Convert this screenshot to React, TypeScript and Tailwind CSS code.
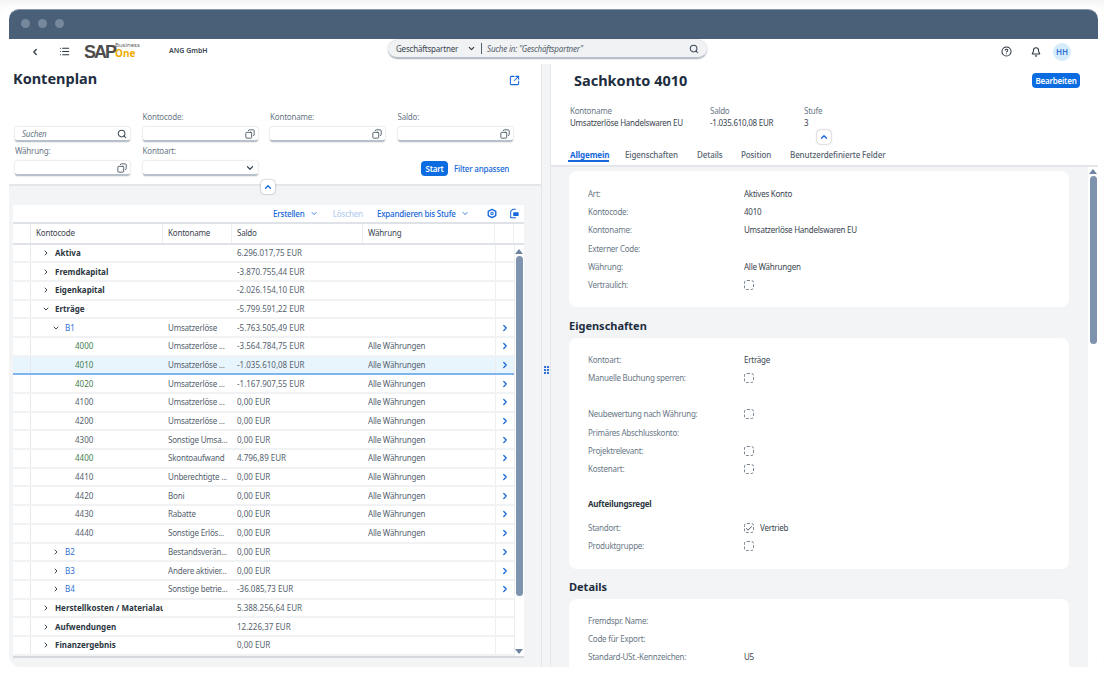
import { Bell, Check, ChevronDown, ChevronLeft, ChevronRight, ChevronUp, CircleHelp, Copy, List, Search, SquareArrowOutUpRight } from "lucide-react";

type Row = {
  level: 0 | 1 | 2;
  code: string;
  name?: string;
  saldo: string;
  cur?: boolean;
  exp?: "open" | "closed";
  tone: "bold" | "blue" | "green" | "gray";
  nav?: boolean;
  sel?: boolean;
};

const rows: Row[] = [
  { level: 0, code: "Aktiva", saldo: "6.296.017,75 EUR", exp: "closed", tone: "bold" },
  { level: 0, code: "Fremdkapital", saldo: "-3.870.755,44 EUR", exp: "closed", tone: "bold" },
  { level: 0, code: "Eigenkapital", saldo: "-2.026.154,10 EUR", exp: "closed", tone: "bold" },
  { level: 0, code: "Erträge", saldo: "-5.799.591,22 EUR", exp: "open", tone: "bold" },
  { level: 1, code: "B1", name: "Umsatzerlöse", saldo: "-5.763.505,49 EUR", exp: "open", tone: "blue", nav: true },
  { level: 2, code: "4000", name: "Umsatzerlöse ...", saldo: "-3.564.784,75 EUR", cur: true, tone: "green", nav: true },
  { level: 2, code: "4010", name: "Umsatzerlöse ...", saldo: "-1.035.610,08 EUR", cur: true, tone: "green", nav: true, sel: true },
  { level: 2, code: "4020", name: "Umsatzerlöse ...", saldo: "-1.167.907,55 EUR", cur: true, tone: "green", nav: true },
  { level: 2, code: "4100", name: "Umsatzerlöse ...", saldo: "0,00 EUR", cur: true, tone: "gray", nav: true },
  { level: 2, code: "4200", name: "Umsatzerlöse ...", saldo: "0,00 EUR", cur: true, tone: "gray", nav: true },
  { level: 2, code: "4300", name: "Sonstige Umsa...", saldo: "0,00 EUR", cur: true, tone: "gray", nav: true },
  { level: 2, code: "4400", name: "Skontoaufwand", saldo: "4.796,89 EUR", cur: true, tone: "green", nav: true },
  { level: 2, code: "4410", name: "Unberechtigte ...", saldo: "0,00 EUR", cur: true, tone: "gray", nav: true },
  { level: 2, code: "4420", name: "Boni", saldo: "0,00 EUR", cur: true, tone: "gray", nav: true },
  { level: 2, code: "4430", name: "Rabatte", saldo: "0,00 EUR", cur: true, tone: "gray", nav: true },
  { level: 2, code: "4440", name: "Sonstige Erlös...", saldo: "0,00 EUR", cur: true, tone: "gray", nav: true },
  { level: 1, code: "B2", name: "Bestandsverän...", saldo: "0,00 EUR", exp: "closed", tone: "blue", nav: true },
  { level: 1, code: "B3", name: "Andere aktivier...", saldo: "0,00 EUR", exp: "closed", tone: "blue", nav: true },
  { level: 1, code: "B4", name: "Sonstige betrie...", saldo: "-36.085,73 EUR", exp: "closed", tone: "blue", nav: true },
  { level: 0, code: "Herstellkosten / Materialaufwand", saldo: "5.388.256,64 EUR", exp: "closed", tone: "bold" },
  { level: 0, code: "Aufwendungen", saldo: "12.226,37 EUR", exp: "closed", tone: "bold" },
  { level: 0, code: "Finanzergebnis", saldo: "0,00 EUR", exp: "closed", tone: "bold" },
];

const toneClass = {
  bold: "font-bold text-[#2b3640]",
  blue: "text-[#2f6fd6]",
  green: "text-[#3f7d4e]",
  gray: "text-[#55626e]",
};

const levelClass = { 0: "pl-[11px]", 1: "pl-[21px]", 2: "pl-[44px]" };

function HexGear() {
  return (
    <svg viewBox="0 0 12 12" className="ml-[18px] h-[11px] w-[11px]" fill="none" stroke="currentColor">
      <path d="M6 1l4.5 2.5v5L6 11 1.500 8.500v-5z" strokeWidth="1.6" strokeLinejoin="round" />
      <circle cx="6" cy="6" r="1.500" strokeWidth="1.2" />
    </svg>
  );
}

function ExportIcon() {
  return (
    <svg viewBox="0 0 12 12" className="ml-[12px] h-[11px] w-[11px]" fill="none" stroke="currentColor">
      <path d="M8 1H4.500L2 3.500V11h6.500" strokeWidth="1.200" strokeLinejoin="round" />
      <rect x="5" y="4.500" width="6.500" height="4.500" fill="currentColor" stroke="none" rx="0.500" />
    </svg>
  );
}

function FilterField({ label, kind }: { label?: string; kind: "copy" | "search" | "select" }) {
  return (
    <div className="flex w-[115px] flex-col">
      <div className="h-[15px] text-[8px] leading-[10px] tracking-[-0.2px] text-[#6a7886]">{label}</div>
      <div className="flex h-[15px] items-center justify-between rounded-[3px] border-b-2 border-b-[#b8c1cb] bg-white px-[2px] pr-[3px] shadow-[0_0_2px_rgba(0,0,0,0.25)]">
        <span className="pl-[5px] text-[8px] tracking-[-0.2px] text-[#6a7886] italic">{kind === "search" ? "Suchen" : ""}</span>
        {kind === "copy" && <Copy className="h-[10px] w-[10px] -scale-x-100 text-[#3c4a58]" strokeWidth={2} />}
        {kind === "search" && <Search className="h-[10px] w-[10px] text-[#3c4a58]" strokeWidth={2.5} />}
        {kind === "select" && <ChevronDown className="h-[10px] w-[10px] text-[#3c4a58]" strokeWidth={3} />}
      </div>
    </div>
  );
}

function CollapseBtn() {
  return (
    <div className="flex h-[14px] w-[14px] items-center justify-center rounded-[4px] bg-white shadow-[0_0_2px_rgba(0,0,0,0.45)]">
      <ChevronUp className="h-[10px] w-[10px] text-[#1667d9]" strokeWidth={3} />
    </div>
  );
}

function TreeRow({ row }: { row: Row }) {
  return (
    <div
      className={`grid h-[18.7px] grid-cols-[18px_132px_69px_131px_132px_19px] items-center border-b-2 text-[8px] ${
        row.sel ? "border-b-[#7fb4ee] bg-[#e9f5fd]" : "border-b-[#f1f2f4] bg-white"
      }`}
    >
      <div className="h-full border-r border-r-[#e6e8eb]" />
      <div className={`flex h-full items-center overflow-hidden whitespace-nowrap ${levelClass[row.level]}`}>
        {row.exp === "closed" && <ChevronRight className="mr-[5px] h-[8px] w-[8px] shrink-0 text-[#3c4a58]" strokeWidth={3} />}
        {row.exp === "open" && <ChevronDown className="mr-[5px] h-[8px] w-[8px] shrink-0 text-[#3c4a58]" strokeWidth={3} />}
        <span className={toneClass[row.tone]}>{row.code}</span>
      </div>
      <div className="pl-[5px] tracking-[-0.2px] whitespace-nowrap text-[#55626e]">{row.name}</div>
      <div className="pl-[5px] whitespace-nowrap text-[#55626e]">{row.saldo}</div>
      <div className="pl-[5px] tracking-[-0.2px] text-[#55626e]">{row.cur ? "Alle Währungen" : ""}</div>
      <div className="flex h-full items-center justify-center border-l border-l-[#eceef0] pr-[1px]">
        {row.nav && <ChevronRight className="h-[10px] w-[10px] text-[#1667d9]" strokeWidth={3} />}
      </div>
    </div>
  );
}

function Field({ label, value, box, checked }: { label: string; value?: string; box?: boolean; checked?: boolean }) {
  return (
    <div className="flex h-[18.2px] items-center text-[8px] tracking-[-0.25px]">
      <div className="w-[156px] shrink-0 text-[#6a7886]">{label}</div>
      {box && (
        <div className="mr-[6px] flex h-[10px] w-[10px] items-center justify-center rounded-[3px] border border-dashed border-[#7d8791]">
          {checked && <Check className="h-[9px] w-[9px] text-[#2b3640]" strokeWidth={2.5} />}
        </div>
      )}
      {value && <div className="whitespace-nowrap text-[#3a4550]">{value}</div>}
    </div>
  );
}

function Card({ children, className }: { children: React.ReactNode; className: string }) {
  return <div className={`flex flex-col rounded-[8px] bg-white pl-[19px] ${className}`}>{children}</div>;
}

export default function App() {
  return (
    <div className="h-[683px] w-[1104px] overflow-hidden bg-white [font-family:'Noto_Sans','Open_Sans',sans-serif]">
      <div className="flex h-[667px] flex-col pt-[9px] pr-[6px] pl-[9px] shadow-[inset_0_8px_8px_-4px_rgba(0,0,0,0.05)]">
        <div className="flex h-[30px] shrink-0 items-center gap-[8px] rounded-t-[10px] border-t border-t-[#8a98a8] bg-[#4a5f78] pb-[2px] pl-[12px]">
          <span className="h-[9px] w-[9px] rounded-full bg-[#76889c]" />
          <span className="h-[9px] w-[9px] rounded-full bg-[#76889c]" />
          <span className="h-[9px] w-[9px] rounded-full bg-[#76889c]" />
        </div>

        <div className="relative flex h-[25px] shrink-0 items-center bg-white">
          <ChevronLeft className="ml-[21px] h-[10px] w-[10px] text-[#2b3640]" strokeWidth={3} />
          <List className="ml-[19px] h-[11px] w-[11px] text-[#2b3640]" strokeWidth={2.5} />
          <div className="relative ml-[14px] h-[18px] w-[58px]">
            <span className="absolute top-[-3px] left-0 text-[18px] leading-[24px] font-bold tracking-[-2px] text-[#4d4d4d] [font-family:'Liberation_Sans',sans-serif]">SAP</span>
            <span className="absolute top-[0px] left-[31px] text-[6px] leading-[5px] text-[#5c5c5c]">Business</span>
            <span className="absolute top-[6px] left-[31px] text-[10px] leading-[8px] font-bold text-[#f0ab00]">One</span>
          </div>
          <span className="ml-[27px] text-[7px] font-semibold text-[#3a4550]">ANG GmbH</span>
          <div className="absolute top-[1px] left-[379px] flex h-[19px] w-[319px] items-center rounded-[10px] border-b-2 border-b-[#b8c1cb] bg-[#f1f2f3] pr-[8px] pl-[8px] shadow-[0_0_2px_rgba(0,0,0,0.25)]">
            <span className="text-[8px] tracking-[-0.2px] text-[#3a4550]">Geschäftspartner</span>
            <ChevronDown className="ml-[9px] h-[9px] w-[9px] text-[#2b3640]" strokeWidth={3} />
            <span className="mx-[5px] h-[11px] w-px bg-[#55626e]" />
            <span className="text-[8px] tracking-[-0.2px] text-[#55626e] italic">Suche in: "Geschäftspartner"</span>
            <Search className="ml-auto h-[10px] w-[10px] text-[#3c4a58]" strokeWidth={2.5} />
          </div>
          <div className="ml-auto flex items-center pr-[27px]">
            <CircleHelp className="h-[11px] w-[11px] text-[#2b3640]" strokeWidth={2.2} />
            <Bell className="ml-[19px] h-[10px] w-[10px] text-[#2b3640]" strokeWidth={2.5} />
            <div className="ml-[12px] flex h-[18px] w-[18px] items-center justify-center rounded-full bg-[#d5ecfb] text-[8px] font-semibold text-[#2f6fd6]">HH</div>
          </div>
        </div>

        <div className="flex min-h-0 flex-1 overflow-hidden rounded-b-[12px] bg-[#f3f4f6]">
          <div className="flex w-[532px] shrink-0 flex-col">
            <div className="relative h-[122px] shrink-0 border-b-2 border-b-[#e4e6e9] bg-white pl-[5px]">
              <div className="flex h-[29px] items-center justify-between pr-[21px]">
                <h1 className="-ml-px text-[14.5px] font-bold text-[#1d2d3e]">Kontenplan</h1>
                <SquareArrowOutUpRight className="mt-[4px] h-[11px] w-[11px] text-[#1667d9]" strokeWidth={2.3} />
              </div>
              <div className="mt-[19px] flex gap-[12.5px] pl-px">
                <FilterField kind="search" />
                <FilterField label="Kontocode:" kind="copy" />
                <FilterField label="Kontoname:" kind="copy" />
                <FilterField label="Saldo:" kind="copy" />
              </div>
              <div className="mt-[4px] flex items-end gap-[12.5px] pl-px">
                <FilterField label="Währung:" kind="copy" />
                <FilterField label="Kontoart:" kind="select" />
                <div className="ml-[151px] flex items-center gap-[6px]">
                  <button type="button" className="h-[15px] w-[27px] rounded-[4px] bg-[#0a6ce0] text-[8px] tracking-[-0.2px] font-semibold text-white">Start</button>
                  <span className="text-[8px] tracking-[-0.2px] font-medium text-[#1667d9]">Filter anpassen</span>
                </div>
              </div>
              <div className="absolute top-[116px] left-[252px]"><CollapseBtn /></div>
            </div>

            <div className="mt-[19px] ml-[4px] w-[511px]">
              <div className="flex h-[17px] items-center whitespace-nowrap bg-white pr-[5px] text-[8px] tracking-[-0.2px] font-medium text-[#1667d9]">
                <span className="ml-[260px]">Erstellen</span>
                <ChevronDown className="ml-[5px] h-[9px] w-[9px]" strokeWidth={2.5} />
                <span className="ml-[15px] text-[#b4cdef]">Löschen</span>
                <span className="ml-[14px]">Expandieren bis Stufe</span>
                <ChevronDown className="ml-[5px] h-[9px] w-[9px]" strokeWidth={2.5} />
                <HexGear />
                <ExportIcon />
              </div>
              <div className="grid h-[22.5px] grid-cols-[18px_132px_69px_131px_132px_19px_10px] items-center border-y-2 border-y-[#dfe2e6] bg-white text-[8px] tracking-[-0.2px] text-[#3a4550]">
                <div className="h-full border-r border-r-[#e6e8eb]" />
                <div className="flex h-full items-center border-r border-r-[#eceef0] pb-px pl-[5px]">Kontocode</div>
                <div className="flex h-full items-center border-r border-r-[#eceef0] pb-px pl-[5px]">Kontoname</div>
                <div className="flex h-full items-center border-r border-r-[#eceef0] pb-px pl-[5px]">Saldo</div>
                <div className="flex h-full items-center border-r border-r-[#eceef0] pb-px pl-[5px]">Währung</div>
                <div className="h-full border-r border-r-[#eceef0]" />
                <div />
              </div>
              <div className="flex border-b-2 border-b-[#d4d7db] bg-white">
                <div className="w-[501px]">
                  {rows.map((row) => (
                    <TreeRow key={row.code} row={row} />
                  ))}
                </div>
                <div className="flex w-[10px] flex-col items-center border-l border-l-[#eceef0] pt-[4px] pr-[1px] pb-[2px]">
                  <span className="h-0 w-0 border-x-[4px] border-b-[5px] border-x-transparent border-b-[#6f84a0]" />
                  <span className="mt-[2px] h-[340px] w-[7px] rounded-[4px] bg-[#7e93ae]" />
                  <span className="mt-auto h-0 w-0 border-x-[4px] border-t-[5px] border-x-transparent border-t-[#6f84a0]" />
                </div>
              </div>
            </div>
          </div>

          <div className="relative flex w-[10px] shrink-0 items-center justify-center border-x border-x-[#e4e6e9] bg-[#f3f4f6] pt-[9px]">
            <div className="grid grid-cols-2 gap-[1px]">
              {[1, 2, 3, 4, 5, 6].map((i) => (
                <span key={i} className="h-[2px] w-[2px] bg-[#2f6fd6]" />
              ))}
            </div>
          </div>

          <div className="flex min-w-0 flex-1 flex-col">
            <div className="relative h-[103px] shrink-0 border-b-2 border-b-[#e4e6e9] bg-white pl-[19px]">
              <div className="flex h-[33px] items-center justify-between pr-[18px] pl-[4px]">
                <h2 className="text-[14.5px] font-bold text-[#1d2d3e]">Sachkonto 4010</h2>
                <button type="button" className="h-[15px] w-[48px] rounded-[4px] bg-[#0a6ce0] text-[8px] tracking-[-0.2px] font-semibold text-white">Bearbeiten</button>
              </div>
              <div className="mt-[8px] flex text-[8px] tracking-[-0.25px]">
                <div className="w-[140px]">
                  <div className="leading-[12px] text-[#6a7886]">Kontoname</div>
                  <div className="leading-[12px] text-[#3a4550]">Umsatzerlöse Handelswaren EU</div>
                </div>
                <div className="w-[94px]">
                  <div className="leading-[12px] text-[#6a7886]">Saldo</div>
                  <div className="leading-[12px] text-[#3a4550]">-1.035.610,08 EUR</div>
                </div>
                <div>
                  <div className="leading-[12px] text-[#6a7886]">Stufe</div>
                  <div className="leading-[12px] text-[#3a4550]">3</div>
                </div>
              </div>
              <div className="absolute top-[66px] left-[266px]"><CollapseBtn /></div>
              <div className="mt-[20px] flex text-[8px] tracking-[-0.1px] font-medium text-[#55626e]">
                <span className="relative w-[55px] font-bold text-[#1667d9]">
                  Allgemein
                  <span className="absolute top-[11px] -left-[2px] h-[2px] w-[41px] bg-[#1667d9]" />
                </span>
                <span className="w-[72px]">Eigenschaften</span>
                <span className="w-[44px]">Details</span>
                <span className="w-[49px]">Position</span>
                <span>Benutzerdefinierte Felder</span>
              </div>
            </div>

            <div className="flex min-h-0 flex-1">
              <div className="min-w-0 flex-1 overflow-hidden pt-[4px] pl-[18px] pr-[19px]">
                <Card className="h-[136px] justify-start pt-[14px]">
                  <Field label="Art:" value="Aktives Konto" />
                  <Field label="Kontocode:" value="4010" />
                  <Field label="Kontoname:" value="Umsatzerlöse Handelswaren EU" />
                  <Field label="Externer Code:" />
                  <Field label="Währung:" value="Alle Währungen" />
                  <Field label="Vertraulich:" box />
                </Card>
                <h3 className="mt-[10px] h-[21px] text-[11px] leading-[17px] font-bold text-[#1d2d3e]">Eigenschaften</h3>
                <Card className="h-[231px] pt-[13px]">
                  <Field label="Kontoart:" value="Erträge" />
                  <Field label="Manuelle Buchung sperren:" box />
                  <div className="h-[18px]" />
                  <Field label="Neubewertung nach Währung:" box />
                  <Field label="Primäres Abschlusskonto:" />
                  <Field label="Projektrelevant:" box />
                  <Field label="Kostenart:" box />
                  <div className="mt-[17px] mb-[6px] h-[18px] text-[8px] leading-[18px] tracking-[-0.2px] font-bold text-[#2b3640]">Aufteilungsregel</div>
                  <Field label="Standort:" box checked value="Vertrieb" />
                  <Field label="Produktgruppe:" box />
                </Card>
                <h3 className="mt-[9px] h-[21px] text-[11px] leading-[17px] font-bold text-[#1d2d3e]">Details</h3>
                <Card className="h-[120px] pt-[13px]">
                  <Field label="Fremdspr. Name:" />
                  <Field label="Code für Export:" />
                  <Field label="Standard-USt.-Kennzeichen:" value="U5" />
                </Card>
              </div>
              <div className="flex w-[10px] shrink-0 flex-col items-center bg-white pt-[2px]">
                <span className="h-0 w-0 border-x-[4px] border-b-[5px] border-x-transparent border-b-[#6f84a0]" />
                <span className="mt-[2px] h-[168px] w-[7px] rounded-[4px] bg-[#7e93ae]" />
              </div>
            </div>
          </div>
        </div>
      </div>
    </div>
  );
}
